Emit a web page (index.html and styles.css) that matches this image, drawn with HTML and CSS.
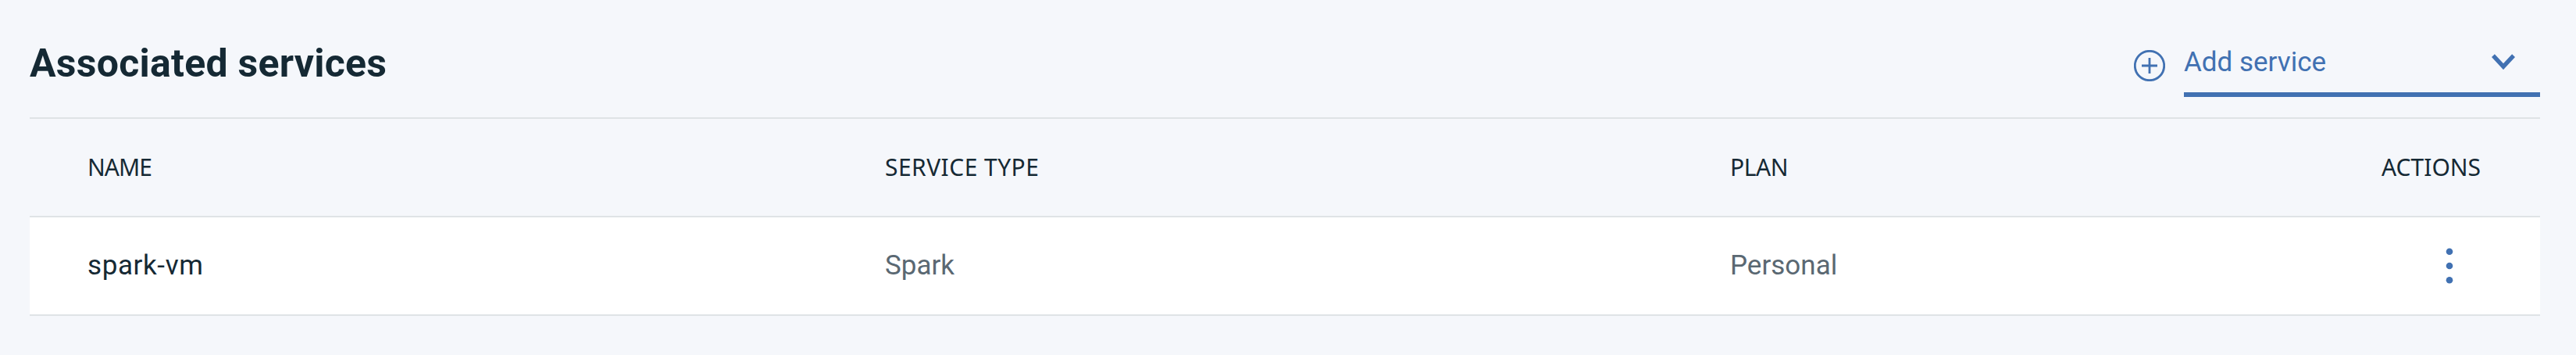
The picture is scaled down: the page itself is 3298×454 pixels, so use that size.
FILE: index.html
```html
<!DOCTYPE html>
<html lang="en">
<head>
<meta charset="utf-8">
<title>Associated services</title>
<link rel="stylesheet" href="styles.css">
</head>
<body>
<section class="panel">
  <header class="panel-header">
    <h2 class="title">Associated services</h2>
    <div class="add">
      <svg class="plus" viewBox="0 0 40 40" width="40" height="40"><circle cx="20" cy="20" r="18.7"/><path d="M10 20h20M20 10v20"/></svg>
      <div class="dropdown">
        <span>Add service</span>
        <svg class="chevron" viewBox="0 0 30 20" width="30" height="20"><path d="M1.9 2.2 15 16.2 28.1 2.2"/></svg>
      </div>
    </div>
  </header>
  <div class="row head">
    <span class="head-name">NAME</span>
    <span class="head-type">SERVICE TYPE</span>
    <span class="head-plan">PLAN</span>
    <span class="head-actions">ACTIONS</span>
  </div>
  <div class="row item">
    <span class="name">spark-vm</span>
    <span>Spark</span>
    <span>Personal</span>
    <svg class="menu" viewBox="0 0 10 46" width="10" height="46"><circle cx="5" cy="4.8" r="4.3"/><circle cx="5" cy="23" r="4.3"/><circle cx="5" cy="41.2" r="4.3"/></svg>
  </div>
</section>
</body>
</html>
```
FILE: styles.css
```css
body {
  margin: 0;
  background: #f5f7fb;
  color: #152934;
  font-family: Roboto, sans-serif;
}
.panel {
  margin: 0 46px 0 38px;
}
.panel-header {
  display: flex;
  justify-content: space-between;
  height: 150px;
  border-bottom: 2px solid #dfe3e6;
}
.title {
  margin: 0;
  padding-top: 51px;
  font-size: 50px;
  line-height: 60px;
  font-weight: 700;
  letter-spacing: 0.25px;
}
.add {
  display: flex;
  gap: 24px;
  color: #4171b2;
}
.plus {
  margin-top: 64px;
  fill: none;
  stroke: #4171b2;
  stroke-width: 2.8;
}
.dropdown {
  display: flex;
  justify-content: space-between;
  box-sizing: border-box;
  width: 456px;
  height: 124px;
  padding: 60px 32px 0 0;
  border-bottom: 6px solid #4171b2;
  font-size: 35px;
  line-height: 40px;
}
.chevron {
  margin-top: 9px;
  fill: none;
  stroke: #4171b2;
  stroke-width: 5.4;
}
.row {
  display: grid;
  grid-template-columns: 1021px 1082px 834px 124px;
  align-items: center;
  height: 124px;
  padding-left: 74px;
  border-bottom: 2px solid #dfe3e6;
}
.head {
  font-family: "Noto Sans", sans-serif;
  font-size: 30px;
  line-height: 40px;
}
.head-name {
  letter-spacing: -1px;
}
.head-type {
  letter-spacing: 0.45px;
}
.head-plan {
  letter-spacing: -0.4px;
}
.head-actions {
  letter-spacing: 0;
}
.item {
  background: #fff;
  font-size: 35px;
  line-height: 40px;
  color: #5a6872;
}
.name {
  color: #152934;
  letter-spacing: 0.6px;
}
.menu {
  margin-left: 82px;
  fill: #4171b2;
}
```
